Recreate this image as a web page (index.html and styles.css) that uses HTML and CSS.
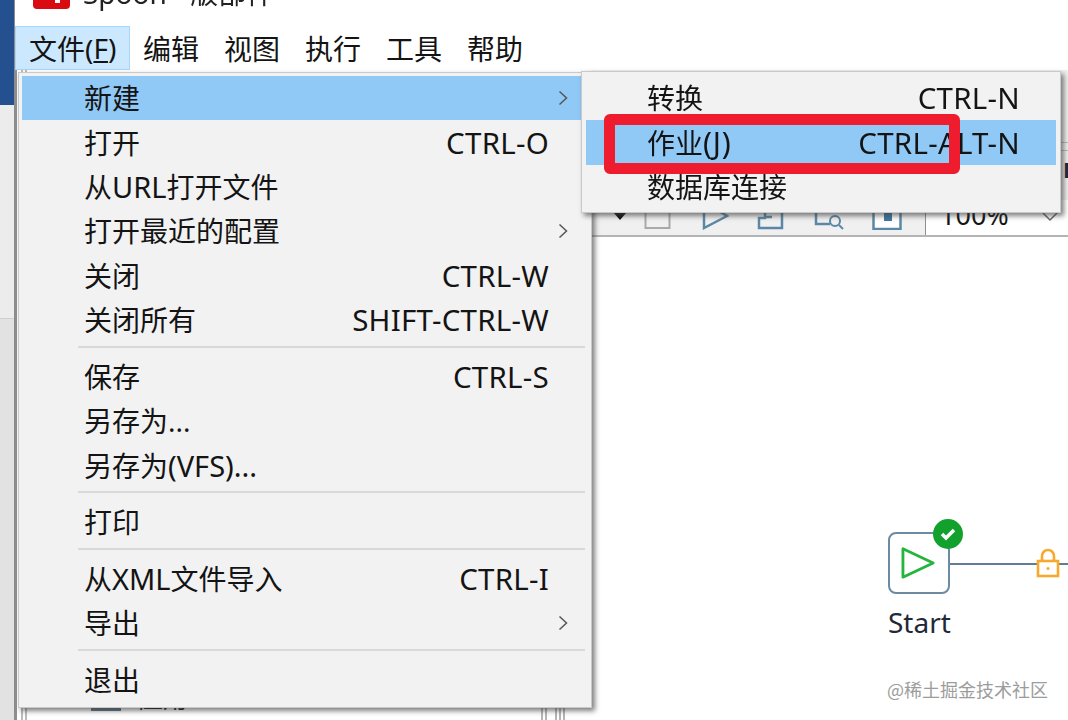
FILE: index.html
```html
<!DOCTYPE html>
<html lang="zh-CN">
<head>
<meta charset="utf-8">
<title>Spoon - 版部件</title>
<link rel="stylesheet" href="styles.css">
</head>
<body>
<div class="app">
  <aside class="edge"><div class="edge-blue"></div><div class="edge-gray"></div><div class="edge-gray-low"></div></aside>
  <div class="window">
    <header class="titlebar">
      <div class="title-inner">
        <svg class="logo" viewBox="0 0 37 33"><rect width="37" height="33" rx="4" fill="#d90a10"/><rect x="22" y="20" width="5" height="7" fill="#fff"/></svg>
        <span class="title-text">Spoon - 版部件</span>
      </div>
    </header>
    <nav class="menubar">
      <span class="menu-top active">文件(<u>F</u>)</span>
      <span class="menu-top">编辑</span>
      <span class="menu-top">视图</span>
      <span class="menu-top">执行</span>
      <span class="menu-top">工具</span>
      <span class="menu-top">帮助</span>
    </nav>
    <div class="workspace">
      <section class="leftpane">
        <div class="tree-row"><span class="tree-bar"></span><span class="tree-text">应用</span></div>
      </section>
      <div class="split-lines"><i></i><i></i><i></i><i></i><i></i></div>
      <section class="rightpane">
        <div class="tabband">
          <div class="tabline"></div>
          <div class="tabline"></div>
          <span class="tabmark">D</span>
        </div>
        <div class="toolbar">
          <svg class="tool" viewBox="0 0 20 30" width="20" height="30"><path d="M3 12h14l-7 8z" fill="#111"/></svg>
          <svg class="tool t2" viewBox="0 0 28 30" width="28" height="30"><rect x="1.500" y="4" width="24" height="24" fill="none" stroke="#a9a9a9" stroke-width="2"/></svg>
          <svg class="tool t3" viewBox="0 0 28 30" width="28" height="30"><path d="M2 2v26l23-12z" fill="none" stroke="#5b88a6" stroke-width="2.500"/></svg>
          <svg class="tool t4" viewBox="0 0 28 30" width="28" height="30"><path d="M2 18v10h23V4H12v7H8v7z M9 17h6" fill="none" stroke="#5b88a6" stroke-width="2.500"/></svg>
          <svg class="tool t5" viewBox="0 0 32 30" width="32" height="30"><path d="M2 10v14h14" fill="none" stroke="#5b88a6" stroke-width="2.500"/><circle cx="21" cy="21" r="5" fill="none" stroke="#5b88a6" stroke-width="2"/><path d="M25 25l4 4" stroke="#5b88a6" stroke-width="2"/></svg>
          <svg class="tool t6" viewBox="0 0 30 30" width="30" height="30"><rect x="1.500" y="3" width="27" height="26" fill="#fff" stroke="#5b88a6" stroke-width="2.500"/><rect x="12" y="13" width="8" height="8" fill="#3f78a0"/></svg>
          <div class="zoombox"><span>100%</span><svg viewBox="0 0 16 10" width="16" height="10"><path d="M1 1l7 7 7-7" fill="none" stroke="#666" stroke-width="1.500"/></svg></div>
        </div>
        <div class="canvas">
          <div class="node">
            <svg viewBox="0 0 40 36" width="38" height="34"><path d="M3 3v30l32-15z" fill="none" stroke="#25b53c" stroke-width="3" stroke-linejoin="round"/></svg>
            <span class="badge"><svg viewBox="0 0 20 20" width="20" height="20"><path d="M4 10l4 4 8-8" fill="none" stroke="#fff" stroke-width="3.500"/></svg></span>
          </div>
          <div class="node-label">Start</div>
          <div class="hop"></div>
          <svg class="lock" viewBox="0 0 24 30" width="24" height="30"><path d="M6 13V8a6 6 0 0 1 12 0v5" fill="none" stroke="#f5a92d" stroke-width="2.600"/><rect x="2" y="13" width="20" height="15" fill="#fff" stroke="#f5a92d" stroke-width="2.600"/><circle cx="12" cy="20.500" r="1.500" fill="#f5a92d"/></svg>
        </div>
      </section>
    </div>
  </div>

  <div class="menu main-menu">
    <div class="row hot"><span>新建</span><svg class="chev" viewBox="0 0 10 16" width="10" height="16"><path d="M1.500 1.500L8.500 8l-7 6.500" fill="none" stroke="#555" stroke-width="1.500"/></svg></div>
    <div class="row"><span>打开</span><span class="key">CTRL-O</span></div>
    <div class="row"><span>从<span class="lat">URL</span>打开文件</span></div>
    <div class="row"><span>打开最近的配置</span><svg class="chev" viewBox="0 0 10 16" width="10" height="16"><path d="M1.500 1.500L8.500 8l-7 6.500" fill="none" stroke="#555" stroke-width="1.500"/></svg></div>
    <div class="row"><span>关闭</span><span class="key">CTRL-W</span></div>
    <div class="row"><span>关闭所有</span><span class="key">SHIFT-CTRL-W</span></div>
    <div class="sep"></div>
    <div class="row"><span>保存</span><span class="key">CTRL-S</span></div>
    <div class="row"><span>另存为...</span></div>
    <div class="row"><span>另存为<span class="lat">(VFS)...</span></span></div>
    <div class="sep"></div>
    <div class="row"><span>打印</span></div>
    <div class="sep"></div>
    <div class="row"><span>从<span class="lat">XML</span>文件导入</span><span class="key">CTRL-I</span></div>
    <div class="row"><span>导出</span><svg class="chev" viewBox="0 0 10 16" width="10" height="16"><path d="M1.500 1.500L8.500 8l-7 6.500" fill="none" stroke="#555" stroke-width="1.500"/></svg></div>
    <div class="sep"></div>
    <div class="row"><span>退出</span></div>
  </div>

  <div class="menu sub-menu">
    <div class="row"><span>转换</span><span class="key">CTRL-N</span></div>
    <div class="row hot"><span>作业<span class="lat-wide">(J)</span></span><span class="key">CTRL-ALT-N</span></div>
    <div class="row"><span>数据库连接</span></div>
    <div class="redbox"></div>
  </div>

  <div class="watermark">@稀土掘金技术社区</div>
</div>
</body>
</html>
```

FILE: styles.css
```css
* { box-sizing: border-box; }
html, body { margin: 0; height: 100%; overflow: hidden; background: #fff; }
body { font-family: "Noto Sans", "Noto Sans CJK SC", sans-serif; color: #141414; }

.app { position: relative; display: flex; width: 1068px; height: 720px; overflow: hidden; filter: blur(0.45px); }

.edge { width: 15px; flex: none; display: flex; flex-direction: column; border-right: 1px solid #8c8c8c; }
.edge-blue { height: 105px; background: #24508f; }
.edge-gray { height: 214px; background: #ececec; border-bottom: 1px solid #cfcfcf; }
.edge-gray-low { flex: 1; background: #e2e2e2; }

.window { flex: 1; min-width: 0; display: flex; flex-direction: column; }

.titlebar { height: 26px; flex: none; overflow: hidden; background: #fff; }
.title-inner { display: flex; align-items: flex-end; gap: 13px; height: 36px; margin-top: -27px; padding-left: 18px; }
.logo { width: 37px; height: 33px; flex: none; }
.title-text { font-size: 28px; line-height: 36px; color: #222; transform: translateY(2px); }

.menubar { height: 44px; flex: none; display: flex; align-items: stretch; gap: 25px; background: #fff; font-size: 28px; }
.menu-top { display: flex; align-items: center; }
.menu-top.active { width: 115px; margin-right: -12px; padding-left: 13px; background: #cce8ff; border: 1px solid #a8d6fa; white-space: nowrap; }
.menu-top.active u { text-underline-offset: 2px; }

.workspace { flex: 1; display: flex; min-height: 0; }

.leftpane { width: 526px; flex: none; display: flex; flex-direction: column; justify-content: flex-end; background: linear-gradient(90deg, #fff 4px, #bbb 4px 6px, #fff 6px 8px, #bbb 8px 10px, #fff 10px); border-left: 2px solid #8f8f8f; padding-left: 6px; overflow: hidden; }
.tree-row { display: flex; align-items: center; gap: 18px; height: 28px; margin-bottom: 7px; padding-left: 68px; }
.tree-bar { width: 30px; height: 3px; align-self: flex-end; margin-bottom: 2px; background: #5a7187; }
.tree-text { font-size: 24px; line-height: 28px; }

.split-lines { width: 51px; flex: none; display: flex; gap: 2px; align-items: stretch; padding-top: 600px; background: #fff; }
.split-lines i { width: 2px; background: #b5b5b5; }
.split-lines i:nth-child(3) { margin-left: 6px; }

.rightpane { flex: 1; min-width: 0; display: flex; flex-direction: column; background: #fff; overflow: hidden; }
.tabband { height: 130px; flex: none; display: flex; flex-direction: column; background: #f0f0f0; padding-top: 72px; }
.tabline { height: 1px; margin-bottom: 7px; background: #bcbcbc; }
.tabmark { margin-left: 471px; font-size: 22px; line-height: 22px; font-weight: 700; color: #1b2740; }

.toolbar { height: 37px; flex: none; display: flex; align-items: flex-start; padding-left: 18px; background: #f0f0f0; border-bottom: 2px solid #b4b4b4; }
.tool { flex: none; }
.t2 { margin-left: 14px; }
.t3 { margin-left: 30px; }
.t4 { margin-left: 27px; }
.t5 { margin-left: 29px; }
.t6 { margin-left: 26px; }
.zoombox { margin-left: 23px; flex: 1; height: 35px; display: flex; align-items: flex-start; justify-content: space-between; padding: 0 10px 0 14px; background: #fff; border-left: 1px solid #8f8f8f; font-size: 27px; line-height: 30px; }
.zoombox svg { margin-top: 12px; }

.canvas { flex: 1; position: relative; background: #fff; }
.node { position: absolute; left: 296px; top: 295px; width: 62px; height: 62px; display: flex; align-items: center; justify-content: center; border: 2px solid #6d8aa3; border-radius: 8px; background: #fff; }
.badge { position: absolute; right: -15px; top: -15px; width: 30px; height: 30px; border-radius: 50%; background: #12a12c; display: flex; align-items: center; justify-content: center; }
.node-label { position: absolute; left: 296px; top: 365px; font-size: 28px; line-height: 40px; color: #1f2a36; }
.hop { position: absolute; left: 358px; right: 0; top: 326px; height: 2px; background: #5f7d97; }
.lock { position: absolute; left: 444px; top: 311px; }

.menu { position: absolute; background: #f2f2f2; border: 1px solid #c9c9c9; box-shadow: 3px 3px 5px rgba(60, 60, 60, .65); font-size: 28px; padding: 3px; }
.main-menu { left: 18px; top: 72px; width: 574px; height: 636px; }
.sub-menu { left: 581px; top: 71px; width: 480px; height: 142px; padding: 4px; }

.row { display: flex; align-items: center; justify-content: space-between; height: 44.400px; white-space: nowrap; line-height: 44px; }
.main-menu .row { padding: 0 39px 0 62px; }
.sub-menu .row { padding: 0 36px 0 61px; }
.row.hot { background: #90c8f6; }
.main-menu .row .chev { margin-right: -19px; }
.key { font-size: 29.500px; letter-spacing: 0.250px; }
.lat { font-size: 29px; }
.lat-wide { font-size: 30px; letter-spacing: 0.800px; }

.sep { height: 12.300px; margin: 0 3px 0 56px; display: flex; align-items: center; padding-bottom: 3px; }
.sep::before { content: ""; flex: 1; height: 2px; background: #d9d9d9; }

.redbox { position: absolute; left: 22px; top: 42px; width: 356px; height: 60px; border: 11px solid #ee1c2e; border-radius: 6px; }

.watermark { position: absolute; left: 887px; top: 676px; font-size: 18px; line-height: 26px; color: #9c9c9c; font-family: "Noto Sans CJK SC", sans-serif; }
```
